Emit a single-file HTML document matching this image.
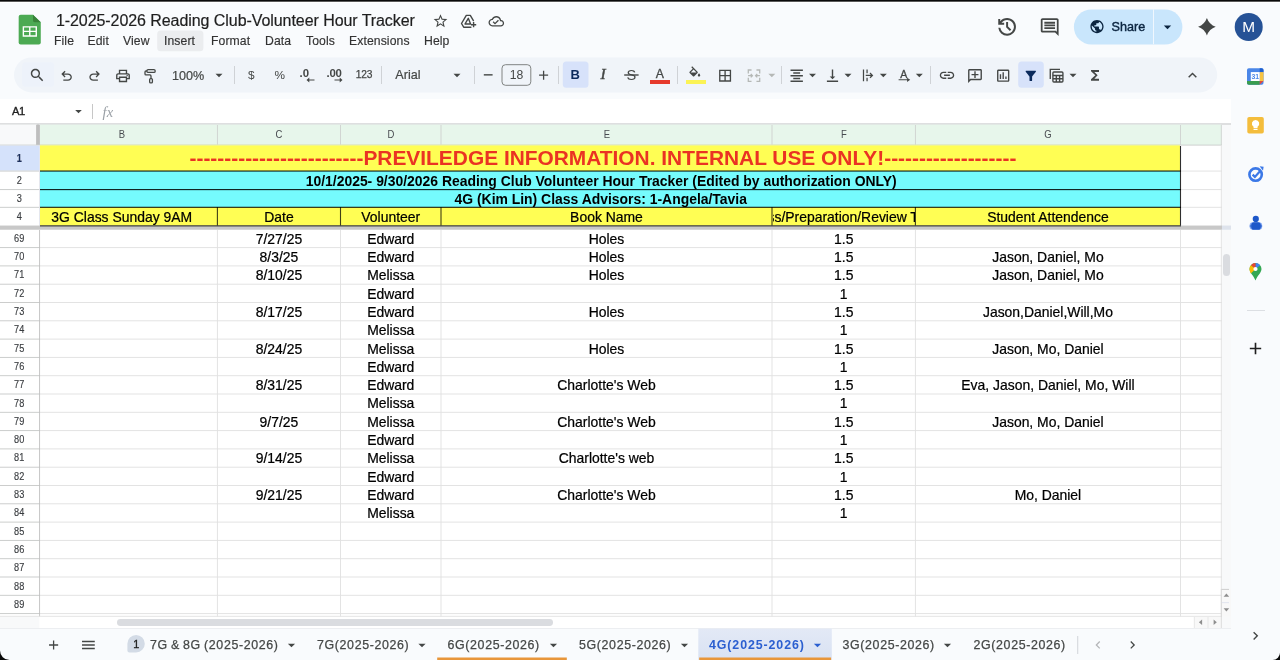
<!DOCTYPE html>
<html lang="en"><head><meta charset="utf-8">
<title>1-2025-2026 Reading Club-Volunteer Hour Tracker</title>
<style>
*{box-sizing:border-box;margin:0;padding:0}
html,body{width:1280px;height:660px;overflow:hidden;background:#f9fbfd}
body{position:relative;font-family:"Liberation Sans",sans-serif;color:#1f1f1f;-webkit-font-smoothing:antialiased}
#w{position:absolute;left:0;top:0;width:1280px;height:660px;overflow:hidden;will-change:transform}
.a{position:absolute}
.t{position:absolute;white-space:pre;line-height:1}
svg{position:absolute;overflow:visible}
.menu{position:absolute;top:33.8px;font-size:12.2px;color:#333;-webkit-text-stroke:.15px #333;white-space:pre;line-height:14px;letter-spacing:.1px}
.sep{position:absolute;top:66px;width:1px;height:18px;background:#cfd2d6}
.tb{position:absolute;font-size:12.2px;color:#444746;white-space:pre;line-height:14px}
.rh{position:absolute;left:.3px;width:38.4px;text-align:center;font-size:10.2px;color:#3a3d40;line-height:12px;transform:scaleX(.9);-webkit-text-stroke:.15px #3a3d40}
.ch{position:absolute;top:128.6px;text-align:center;font-size:10.1px;color:#484b50;line-height:12px;transform:scaleX(.94)}
.c{position:absolute;text-align:center;font-size:13.93px;color:#000;-webkit-text-stroke:.22px #000;white-space:pre;overflow:hidden;display:flex;justify-content:center}
.gl{position:absolute;background:#e1e1e1}
.tab{position:absolute;top:637.6px;font-size:12.4px;color:#444746;white-space:pre;line-height:14px;letter-spacing:.64px;-webkit-text-stroke:.25px #444746}
</style></head>
<body>
<div id="w">
<div class="a" style="left:0;top:0;width:1280px;height:1px;background:#0a0a0a"></div>
<div class="a" style="left:0;top:1px;width:1280px;height:1px;background:#5a5a5a"></div>
<div class="a" style="left:0;top:2px;width:1280px;height:1px;background:#ffffff"></div>
<svg style="left:18px;top:14px" width="25" height="33" viewBox="0 0 25 33"><g transform="translate(0.000 0.000) scale(1.0000 1.0000)">
<g transform="translate(0.67 0.67)">
<path d="M2 0H14.300L22.100 7.600V27.900a2 2 0 0 1-2 2H2a2 2 0 0 1-2-2V2a2 2 0 0 1 2-2z" fill="#4caa53"/>
<path d="M14.300 0L22.100 7.600H16.100a1.800 1.800 0 0 1-1.800-1.800z" fill="#388239"/>
<path d="M4 11.500H18.300v10.600H4zM5.400 12.900v3.100h5v-3.100zM11.800 12.900v3.100h5.100v-3.100zM5.400 17.400v3.300h5v-3.300zM11.800 17.400v3.300h5.100v-3.300z" fill="#fff" fill-rule="evenodd"/>
</g></g></svg>
<div class="t" style="left:55.9px;top:12px;font-size:16px;color:#1f1f1f;line-height:18px;letter-spacing:-.065px;-webkit-text-stroke:.2px #1f1f1f">1-2025-2026 Reading Club-Volunteer Hour Tracker</div>
<svg style="left:156px;top:29px" width="52" height="26" viewBox="0 0 52 26"><g transform="translate(0.000 0.000) scale(1.0000 1.0000)"><rect x="1.20" y="1.60" width="46.20" height="20.60" rx="3.5" fill="#ebedef" /></g></svg>
<div class="menu" style="left:54px">File</div>
<div class="menu" style="left:87.5px">Edit</div>
<div class="menu" style="left:123px">View</div>
<div class="menu" style="left:164px">Insert</div>
<div class="menu" style="left:211px">Format</div>
<div class="menu" style="left:265px">Data</div>
<div class="menu" style="left:306px">Tools</div>
<div class="menu" style="left:349px">Extensions</div>
<div class="menu" style="left:424px">Help</div>
<svg style="left:13px;top:56px" width="1209" height="40" viewBox="0 0 1209 40"><g transform="translate(0.000 0.000) scale(1.0000 1.0000)"><rect x="1.00" y="1.40" width="1203.20" height="35.00" rx="17.5" fill="#f0f4f9" /></g></svg>
<svg style="left:21px;top:61px" width="37" height="30" viewBox="0 0 37 30"><g transform="translate(0.000 0.000) scale(1.0000 1.0000)"><rect x="1.20" y="1.30" width="32.00" height="24.40" rx="3.5" fill="#edf2fa" /></g></svg>
<div class="a" style="left:0;top:99px;width:1231px;height:25px;background:#fff"></div>
<div class="t" style="left:12px;top:105px;font-size:11.2px;color:#1f1f1f;line-height:13px;letter-spacing:-.5px;-webkit-text-stroke:.35px #1f1f1f">A1</div>
<svg style="left:75px;top:109px" width="8" height="6" viewBox="0 0 8 6"><g transform="translate(0.200 0.900) scale(0.6600 0.6800)"><path d="M0 0h10L5 5z" fill="#444746"/></g></svg>
<div class="a" style="left:92px;top:104px;width:1px;height:15px;background:#c7c7c7"></div>
<div class="t" style="left:102.5px;top:103.5px;font-size:14.5px;font-family:'Liberation Serif',serif;font-style:italic;color:#9aa0a6;line-height:16px;letter-spacing:.2px">fx</div>
<div class="a" style="left:0.00px;top:124.00px;width:1231.00px;height:504.00px;background:#fff;"></div>
<div class="a" style="left:0px;top:123px;width:1231px;height:1px;background:rgba(200,202,204,0.600)"></div><div class="a" style="left:0px;top:124px;width:1231px;height:1px;background:rgba(200,202,204,0.600)"></div>
<div class="a" style="left:40px;top:125px;width:1181px;height:20px;background:rgba(231,246,235,1.000)"></div><div class="a" style="left:40px;top:124px;width:1181px;height:1px;background:rgba(231,246,235,0.400)"></div><div class="a" style="left:1221px;top:125px;width:1px;height:20px;background:rgba(231,246,235,0.500)"></div>
<div class="a" style="left:0px;top:125px;width:36px;height:20px;background:rgba(248,249,250,1.000)"></div><div class="a" style="left:0px;top:124px;width:36px;height:1px;background:rgba(248,249,250,0.400)"></div>
<div class="a" style="left:37px;top:125px;width:2px;height:20px;background:rgba(190,190,190,1.000)"></div><div class="a" style="left:37px;top:124px;width:2px;height:1px;background:rgba(190,190,190,0.400)"></div><div class="a" style="left:36px;top:125px;width:1px;height:20px;background:rgba(190,190,190,0.900)"></div><div class="a" style="left:39px;top:125px;width:1px;height:20px;background:rgba(190,190,190,0.900)"></div>
<div class="a" style="left:1222.00px;top:125.00px;width:9.00px;height:503.00px;background:#f8f9fa;"></div>
<div class="a" style="left:216px;top:125px;width:1px;height:20px;background:rgba(206,209,207,0.050)"></div><div class="a" style="left:217px;top:125px;width:1px;height:20px;background:rgba(206,209,207,0.850)"></div>
<div class="a" style="left:340px;top:125px;width:1px;height:20px;background:rgba(206,209,207,0.900)"></div>
<div class="a" style="left:440px;top:125px;width:1px;height:20px;background:rgba(206,209,207,0.450)"></div><div class="a" style="left:441px;top:125px;width:1px;height:20px;background:rgba(206,209,207,0.450)"></div>
<div class="a" style="left:771px;top:125px;width:1px;height:20px;background:rgba(206,209,207,0.450)"></div><div class="a" style="left:772px;top:125px;width:1px;height:20px;background:rgba(206,209,207,0.450)"></div>
<div class="a" style="left:914px;top:125px;width:1px;height:20px;background:rgba(206,209,207,0.050)"></div><div class="a" style="left:915px;top:125px;width:1px;height:20px;background:rgba(206,209,207,0.850)"></div>
<div class="a" style="left:1180px;top:125px;width:1px;height:20px;background:rgba(206,209,207,0.900)"></div>
<div class="a" style="left:1220px;top:125px;width:1px;height:20px;background:rgba(206,209,207,0.150)"></div><div class="a" style="left:1221px;top:125px;width:1px;height:20px;background:rgba(206,209,207,0.750)"></div>
<div class="a" style="left:0px;top:144px;width:1222px;height:1px;background:rgba(206,209,207,0.400)"></div><div class="a" style="left:0px;top:145px;width:1222px;height:1px;background:rgba(206,209,207,0.600)"></div>
<div class="ch" style="left:101.75px;width:40px">B</div>
<div class="ch" style="left:258.95px;width:40px">C</div>
<div class="ch" style="left:370.75px;width:40px">D</div>
<div class="ch" style="left:586.50px;width:40px">E</div>
<div class="ch" style="left:823.70px;width:40px">F</div>
<div class="ch" style="left:1027.95px;width:40px">G</div>
<div class="a" style="left:0px;top:146px;width:39px;height:24px;background:rgba(213,226,251,1.000)"></div><div class="a" style="left:0px;top:145px;width:39px;height:1px;background:rgba(213,226,251,0.400)"></div><div class="a" style="left:0px;top:170px;width:39px;height:1px;background:rgba(213,226,251,0.600)"></div><div class="a" style="left:39px;top:146px;width:1px;height:24px;background:rgba(213,226,251,0.400)"></div>
<div class="a" style="left:216px;top:230px;width:1px;height:387px;background:rgba(224,224,224,0.050)"></div><div class="a" style="left:217px;top:230px;width:1px;height:387px;background:rgba(224,224,224,0.850)"></div>
<div class="a" style="left:340px;top:230px;width:1px;height:387px;background:rgba(224,224,224,0.900)"></div>
<div class="a" style="left:440px;top:230px;width:1px;height:387px;background:rgba(224,224,224,0.450)"></div><div class="a" style="left:441px;top:230px;width:1px;height:387px;background:rgba(224,224,224,0.450)"></div>
<div class="a" style="left:771px;top:230px;width:1px;height:387px;background:rgba(224,224,224,0.450)"></div><div class="a" style="left:772px;top:230px;width:1px;height:387px;background:rgba(224,224,224,0.450)"></div>
<div class="a" style="left:914px;top:230px;width:1px;height:387px;background:rgba(224,224,224,0.050)"></div><div class="a" style="left:915px;top:230px;width:1px;height:387px;background:rgba(224,224,224,0.850)"></div>
<div class="a" style="left:1180px;top:230px;width:1px;height:387px;background:rgba(224,224,224,0.900)"></div>
<div class="a" style="left:1220px;top:230px;width:1px;height:387px;background:rgba(224,224,224,0.150)"></div><div class="a" style="left:1221px;top:230px;width:1px;height:387px;background:rgba(224,224,224,0.750)"></div>
<div class="a" style="left:1180px;top:146px;width:1px;height:80px;background:rgba(224,224,224,0.900)"></div>
<div class="a" style="left:1220px;top:146px;width:1px;height:80px;background:rgba(224,224,224,0.150)"></div><div class="a" style="left:1221px;top:146px;width:1px;height:80px;background:rgba(224,224,224,0.750)"></div>
<div class="a" style="left:0px;top:247px;width:40px;height:1px;background:rgba(198,200,199,0.850)"></div><div class="a" style="left:0px;top:248px;width:40px;height:1px;background:rgba(198,200,199,0.050)"></div>
<div class="a" style="left:40px;top:247px;width:1182px;height:1px;background:rgba(224,224,224,0.850)"></div><div class="a" style="left:40px;top:248px;width:1182px;height:1px;background:rgba(224,224,224,0.050)"></div>
<div class="a" style="left:0px;top:265px;width:40px;height:1px;background:rgba(198,200,199,0.550)"></div><div class="a" style="left:0px;top:266px;width:40px;height:1px;background:rgba(198,200,199,0.350)"></div>
<div class="a" style="left:40px;top:265px;width:1182px;height:1px;background:rgba(224,224,224,0.550)"></div><div class="a" style="left:40px;top:266px;width:1182px;height:1px;background:rgba(224,224,224,0.350)"></div>
<div class="a" style="left:0px;top:283px;width:40px;height:1px;background:rgba(198,200,199,0.250)"></div><div class="a" style="left:0px;top:284px;width:40px;height:1px;background:rgba(198,200,199,0.650)"></div>
<div class="a" style="left:40px;top:283px;width:1182px;height:1px;background:rgba(224,224,224,0.250)"></div><div class="a" style="left:40px;top:284px;width:1182px;height:1px;background:rgba(224,224,224,0.650)"></div>
<div class="a" style="left:0px;top:302px;width:40px;height:1px;background:rgba(198,200,199,0.900)"></div>
<div class="a" style="left:40px;top:302px;width:1182px;height:1px;background:rgba(224,224,224,0.900)"></div>
<div class="a" style="left:0px;top:320px;width:40px;height:1px;background:rgba(198,200,199,0.650)"></div><div class="a" style="left:0px;top:321px;width:40px;height:1px;background:rgba(198,200,199,0.250)"></div>
<div class="a" style="left:40px;top:320px;width:1182px;height:1px;background:rgba(224,224,224,0.650)"></div><div class="a" style="left:40px;top:321px;width:1182px;height:1px;background:rgba(224,224,224,0.250)"></div>
<div class="a" style="left:0px;top:338px;width:40px;height:1px;background:rgba(198,200,199,0.350)"></div><div class="a" style="left:0px;top:339px;width:40px;height:1px;background:rgba(198,200,199,0.550)"></div>
<div class="a" style="left:40px;top:338px;width:1182px;height:1px;background:rgba(224,224,224,0.350)"></div><div class="a" style="left:40px;top:339px;width:1182px;height:1px;background:rgba(224,224,224,0.550)"></div>
<div class="a" style="left:0px;top:356px;width:40px;height:1px;background:rgba(198,200,199,0.050)"></div><div class="a" style="left:0px;top:357px;width:40px;height:1px;background:rgba(198,200,199,0.850)"></div>
<div class="a" style="left:40px;top:356px;width:1182px;height:1px;background:rgba(224,224,224,0.050)"></div><div class="a" style="left:40px;top:357px;width:1182px;height:1px;background:rgba(224,224,224,0.850)"></div>
<div class="a" style="left:0px;top:375px;width:40px;height:1px;background:rgba(198,200,199,0.750)"></div><div class="a" style="left:0px;top:376px;width:40px;height:1px;background:rgba(198,200,199,0.150)"></div>
<div class="a" style="left:40px;top:375px;width:1182px;height:1px;background:rgba(224,224,224,0.750)"></div><div class="a" style="left:40px;top:376px;width:1182px;height:1px;background:rgba(224,224,224,0.150)"></div>
<div class="a" style="left:0px;top:393px;width:40px;height:1px;background:rgba(198,200,199,0.450)"></div><div class="a" style="left:0px;top:394px;width:40px;height:1px;background:rgba(198,200,199,0.450)"></div>
<div class="a" style="left:40px;top:393px;width:1182px;height:1px;background:rgba(224,224,224,0.450)"></div><div class="a" style="left:40px;top:394px;width:1182px;height:1px;background:rgba(224,224,224,0.450)"></div>
<div class="a" style="left:0px;top:411px;width:40px;height:1px;background:rgba(198,200,199,0.150)"></div><div class="a" style="left:0px;top:412px;width:40px;height:1px;background:rgba(198,200,199,0.750)"></div>
<div class="a" style="left:40px;top:411px;width:1182px;height:1px;background:rgba(224,224,224,0.150)"></div><div class="a" style="left:40px;top:412px;width:1182px;height:1px;background:rgba(224,224,224,0.750)"></div>
<div class="a" style="left:0px;top:430px;width:40px;height:1px;background:rgba(198,200,199,0.850)"></div><div class="a" style="left:0px;top:431px;width:40px;height:1px;background:rgba(198,200,199,0.050)"></div>
<div class="a" style="left:40px;top:430px;width:1182px;height:1px;background:rgba(224,224,224,0.850)"></div><div class="a" style="left:40px;top:431px;width:1182px;height:1px;background:rgba(224,224,224,0.050)"></div>
<div class="a" style="left:0px;top:448px;width:40px;height:1px;background:rgba(198,200,199,0.550)"></div><div class="a" style="left:0px;top:449px;width:40px;height:1px;background:rgba(198,200,199,0.350)"></div>
<div class="a" style="left:40px;top:448px;width:1182px;height:1px;background:rgba(224,224,224,0.550)"></div><div class="a" style="left:40px;top:449px;width:1182px;height:1px;background:rgba(224,224,224,0.350)"></div>
<div class="a" style="left:0px;top:466px;width:40px;height:1px;background:rgba(198,200,199,0.250)"></div><div class="a" style="left:0px;top:467px;width:40px;height:1px;background:rgba(198,200,199,0.650)"></div>
<div class="a" style="left:40px;top:466px;width:1182px;height:1px;background:rgba(224,224,224,0.250)"></div><div class="a" style="left:40px;top:467px;width:1182px;height:1px;background:rgba(224,224,224,0.650)"></div>
<div class="a" style="left:0px;top:485px;width:40px;height:1px;background:rgba(198,200,199,0.900)"></div>
<div class="a" style="left:40px;top:485px;width:1182px;height:1px;background:rgba(224,224,224,0.900)"></div>
<div class="a" style="left:0px;top:503px;width:40px;height:1px;background:rgba(198,200,199,0.650)"></div><div class="a" style="left:0px;top:504px;width:40px;height:1px;background:rgba(198,200,199,0.250)"></div>
<div class="a" style="left:40px;top:503px;width:1182px;height:1px;background:rgba(224,224,224,0.650)"></div><div class="a" style="left:40px;top:504px;width:1182px;height:1px;background:rgba(224,224,224,0.250)"></div>
<div class="a" style="left:0px;top:521px;width:40px;height:1px;background:rgba(198,200,199,0.350)"></div><div class="a" style="left:0px;top:522px;width:40px;height:1px;background:rgba(198,200,199,0.550)"></div>
<div class="a" style="left:40px;top:521px;width:1182px;height:1px;background:rgba(224,224,224,0.350)"></div><div class="a" style="left:40px;top:522px;width:1182px;height:1px;background:rgba(224,224,224,0.550)"></div>
<div class="a" style="left:0px;top:539px;width:40px;height:1px;background:rgba(198,200,199,0.050)"></div><div class="a" style="left:0px;top:540px;width:40px;height:1px;background:rgba(198,200,199,0.850)"></div>
<div class="a" style="left:40px;top:539px;width:1182px;height:1px;background:rgba(224,224,224,0.050)"></div><div class="a" style="left:40px;top:540px;width:1182px;height:1px;background:rgba(224,224,224,0.850)"></div>
<div class="a" style="left:0px;top:558px;width:40px;height:1px;background:rgba(198,200,199,0.750)"></div><div class="a" style="left:0px;top:559px;width:40px;height:1px;background:rgba(198,200,199,0.150)"></div>
<div class="a" style="left:40px;top:558px;width:1182px;height:1px;background:rgba(224,224,224,0.750)"></div><div class="a" style="left:40px;top:559px;width:1182px;height:1px;background:rgba(224,224,224,0.150)"></div>
<div class="a" style="left:0px;top:576px;width:40px;height:1px;background:rgba(198,200,199,0.450)"></div><div class="a" style="left:0px;top:577px;width:40px;height:1px;background:rgba(198,200,199,0.450)"></div>
<div class="a" style="left:40px;top:576px;width:1182px;height:1px;background:rgba(224,224,224,0.450)"></div><div class="a" style="left:40px;top:577px;width:1182px;height:1px;background:rgba(224,224,224,0.450)"></div>
<div class="a" style="left:0px;top:594px;width:40px;height:1px;background:rgba(198,200,199,0.150)"></div><div class="a" style="left:0px;top:595px;width:40px;height:1px;background:rgba(198,200,199,0.750)"></div>
<div class="a" style="left:40px;top:594px;width:1182px;height:1px;background:rgba(224,224,224,0.150)"></div><div class="a" style="left:40px;top:595px;width:1182px;height:1px;background:rgba(224,224,224,0.750)"></div>
<div class="a" style="left:0px;top:613px;width:40px;height:1px;background:rgba(198,200,199,0.850)"></div><div class="a" style="left:0px;top:614px;width:40px;height:1px;background:rgba(198,200,199,0.050)"></div>
<div class="a" style="left:40px;top:613px;width:1182px;height:1px;background:rgba(224,224,224,0.850)"></div><div class="a" style="left:40px;top:614px;width:1182px;height:1px;background:rgba(224,224,224,0.050)"></div>
<div class="a" style="left:0px;top:170px;width:40px;height:1px;background:rgba(198,200,199,0.400)"></div><div class="a" style="left:0px;top:171px;width:40px;height:1px;background:rgba(198,200,199,0.500)"></div>
<div class="a" style="left:1181px;top:170px;width:41px;height:1px;background:rgba(224,224,224,0.400)"></div><div class="a" style="left:1181px;top:171px;width:41px;height:1px;background:rgba(224,224,224,0.500)"></div>
<div class="a" style="left:0px;top:189px;width:40px;height:1px;background:rgba(198,200,199,0.850)"></div><div class="a" style="left:0px;top:190px;width:40px;height:1px;background:rgba(198,200,199,0.050)"></div>
<div class="a" style="left:1181px;top:189px;width:41px;height:1px;background:rgba(224,224,224,0.850)"></div><div class="a" style="left:1181px;top:190px;width:41px;height:1px;background:rgba(224,224,224,0.050)"></div>
<div class="a" style="left:0px;top:206px;width:40px;height:1px;background:rgba(198,200,199,0.150)"></div><div class="a" style="left:0px;top:207px;width:40px;height:1px;background:rgba(198,200,199,0.750)"></div>
<div class="a" style="left:1181px;top:206px;width:41px;height:1px;background:rgba(224,224,224,0.150)"></div><div class="a" style="left:1181px;top:207px;width:41px;height:1px;background:rgba(224,224,224,0.750)"></div>
<div class="a" style="left:39px;top:146px;width:1px;height:80px;background:rgba(225,227,235,0.850)"></div><div class="a" style="left:40px;top:146px;width:1px;height:80px;background:rgba(225,227,235,0.050)"></div>
<div class="a" style="left:39px;top:230px;width:1px;height:398px;background:rgba(192,192,192,0.850)"></div><div class="a" style="left:40px;top:230px;width:1px;height:398px;background:rgba(192,192,192,0.050)"></div>
<div class="a" style="left:40.00px;top:145.00px;width:1140.00px;height:26.00px;background:#fffe54;"></div>
<div class="a" style="left:40px;top:144px;width:1140px;height:1px;background:rgba(232,240,170,0.400)"></div><div class="a" style="left:40px;top:145px;width:1140px;height:1px;background:rgba(232,240,170,0.600)"></div>
<div class="a" style="left:40.00px;top:171.00px;width:1140.00px;height:36.00px;background:#75fbfd;"></div>
<div class="a" style="left:40.00px;top:207.00px;width:1140.00px;height:19.00px;background:#fffe54;"></div>
<div class="a" style="left:40px;top:170px;width:1141px;height:1px;background:rgba(0,0,0,0.450)"></div><div class="a" style="left:40px;top:171px;width:1141px;height:1px;background:rgba(0,0,0,0.540)"></div>
<div class="a" style="left:40px;top:189px;width:1141px;height:1px;background:rgba(0,0,0,0.855)"></div><div class="a" style="left:40px;top:190px;width:1141px;height:1px;background:rgba(0,0,0,0.135)"></div>
<div class="a" style="left:40px;top:206px;width:1141px;height:1px;background:rgba(0,0,0,0.225)"></div><div class="a" style="left:40px;top:207px;width:1141px;height:1px;background:rgba(0,0,0,0.765)"></div>
<div class="a" style="left:40px;top:225px;width:1141px;height:1px;background:rgba(0,0,0,0.495)"></div><div class="a" style="left:40px;top:226px;width:1141px;height:1px;background:rgba(0,0,0,0.495)"></div>
<div class="a" style="left:1179px;top:146px;width:1px;height:80px;background:rgba(0,0,0,0.040)"></div><div class="a" style="left:1180px;top:146px;width:1px;height:80px;background:rgba(0,0,0,0.800)"></div><div class="a" style="left:1181px;top:146px;width:1px;height:80px;background:rgba(0,0,0,0.040)"></div>
<div class="a" style="left:216px;top:207px;width:1px;height:19px;background:rgba(0,0,0,0.113)"></div><div class="a" style="left:217px;top:207px;width:1px;height:19px;background:rgba(0,0,0,0.713)"></div>
<div class="a" style="left:339px;top:207px;width:1px;height:19px;background:rgba(0,0,0,0.038)"></div><div class="a" style="left:340px;top:207px;width:1px;height:19px;background:rgba(0,0,0,0.750)"></div><div class="a" style="left:341px;top:207px;width:1px;height:19px;background:rgba(0,0,0,0.038)"></div>
<div class="a" style="left:440px;top:207px;width:1px;height:19px;background:rgba(0,0,0,0.413)"></div><div class="a" style="left:441px;top:207px;width:1px;height:19px;background:rgba(0,0,0,0.413)"></div>
<div class="a" style="left:771px;top:207px;width:1px;height:19px;background:rgba(0,0,0,0.412)"></div><div class="a" style="left:772px;top:207px;width:1px;height:19px;background:rgba(0,0,0,0.412)"></div>
<div class="a" style="left:914px;top:207px;width:1px;height:19px;background:rgba(0,0,0,0.112)"></div><div class="a" style="left:915px;top:207px;width:1px;height:19px;background:rgba(0,0,0,0.712)"></div>
<div class="a" style="left:0px;top:226px;width:1222px;height:3px;background:rgba(200,200,200,1.000)"></div><div class="a" style="left:0px;top:225px;width:1222px;height:1px;background:rgba(200,200,200,0.450)"></div><div class="a" style="left:0px;top:229px;width:1222px;height:1px;background:rgba(200,200,200,0.750)"></div>
<div class="a" style="left:40px;top:225px;width:1141px;height:1px;background:rgba(0,0,0,0.330)"></div><div class="a" style="left:40px;top:226px;width:1141px;height:1px;background:rgba(0,0,0,0.330)"></div>
<div class="a" style="left:1222px;top:226px;width:9px;height:3px;background:rgba(222,227,236,1.000)"></div><div class="a" style="left:1222px;top:225px;width:9px;height:1px;background:rgba(222,227,236,0.450)"></div><div class="a" style="left:1222px;top:229px;width:9px;height:1px;background:rgba(222,227,236,0.750)"></div>
<div class="rh" style="top:152.70px;font-weight:bold;color:#1b2f5e;">1</div>
<div class="rh" style="top:174.50px;">2</div>
<div class="rh" style="top:192.80px;">3</div>
<div class="rh" style="top:211.10px;">4</div>
<div class="t" style="left:189.5px;top:146.5px;font-size:20.9px;font-weight:bold;color:#ea3323;line-height:21px">-------------------------PREVILEDGE INFORMATION. INTERNAL USE ONLY!-------------------</div>
<div class="t" style="left:305.7px;top:173.5px;font-size:13.93px;font-weight:bold;color:#000;line-height:14px">10/1/2025- 9/30/2026 Reading Club Volunteer Hour Tracker (Edited by authorization ONLY)</div>
<div class="t" style="left:454.5px;top:191.8px;font-size:13.93px;font-weight:bold;color:#000;line-height:14px">4G (Kim Lin) Class Advisors: 1-Angela/Tavia</div>
<div class="c" style="left:26.70px;width:190.10px;top:208px;height:18px;line-height:18.6px"><span style="">3G Class Sunday 9AM</span></div>
<div class="c" style="left:218.00px;width:121.90px;top:208px;height:18px;line-height:18.6px"><span style="">Date</span></div>
<div class="c" style="left:341.10px;width:99.30px;top:208px;height:18px;line-height:18.6px"><span style="">Volunteer</span></div>
<div class="c" style="left:441.60px;width:329.80px;top:208px;height:18px;line-height:18.6px"><span style="">Book Name</span></div>
<div class="c" style="left:772.60px;width:142.20px;top:208px;height:18px;line-height:18.6px"><span style="">Class/Preparation/Review Time</span></div>
<div class="c" style="left:916.00px;width:263.90px;top:208px;height:18px;line-height:18.6px"><span style="">Student Attendence</span></div>
<div class="rh" style="top:232.85px;">69</div>
<div class="c" style="left:217.40px;width:123.10px;top:231px;height:16px;line-height:16px"><span>7/27/25</span></div>
<div class="c" style="left:340.50px;width:100.50px;top:231px;height:16px;line-height:16px"><span>Edward</span></div>
<div class="c" style="left:441.00px;width:331.00px;top:231px;height:16px;line-height:16px"><span>Holes</span></div>
<div class="c" style="left:772.00px;width:143.40px;top:231px;height:16px;line-height:16px"><span>1.5</span></div>
<div class="rh" style="top:251.15px;">70</div>
<div class="c" style="left:217.40px;width:123.10px;top:249px;height:16px;line-height:16px"><span>8/3/25</span></div>
<div class="c" style="left:340.50px;width:100.50px;top:249px;height:16px;line-height:16px"><span>Edward</span></div>
<div class="c" style="left:441.00px;width:331.00px;top:249px;height:16px;line-height:16px"><span>Holes</span></div>
<div class="c" style="left:772.00px;width:143.40px;top:249px;height:16px;line-height:16px"><span>1.5</span></div>
<div class="c" style="left:915.40px;width:265.10px;top:249px;height:16px;line-height:16px"><span>Jason, Daniel, Mo</span></div>
<div class="rh" style="top:269.45px;">71</div>
<div class="c" style="left:217.40px;width:123.10px;top:267px;height:16px;line-height:16px"><span>8/10/25</span></div>
<div class="c" style="left:340.50px;width:100.50px;top:267px;height:16px;line-height:16px"><span>Melissa</span></div>
<div class="c" style="left:441.00px;width:331.00px;top:267px;height:16px;line-height:16px"><span>Holes</span></div>
<div class="c" style="left:772.00px;width:143.40px;top:267px;height:16px;line-height:16px"><span>1.5</span></div>
<div class="c" style="left:915.40px;width:265.10px;top:267px;height:16px;line-height:16px"><span>Jason, Daniel, Mo</span></div>
<div class="rh" style="top:287.75px;">72</div>
<div class="c" style="left:340.50px;width:100.50px;top:286px;height:16px;line-height:16px"><span>Edward</span></div>
<div class="c" style="left:772.00px;width:143.40px;top:286px;height:16px;line-height:16px"><span>1</span></div>
<div class="rh" style="top:306.05px;">73</div>
<div class="c" style="left:217.40px;width:123.10px;top:304px;height:16px;line-height:16px"><span>8/17/25</span></div>
<div class="c" style="left:340.50px;width:100.50px;top:304px;height:16px;line-height:16px"><span>Edward</span></div>
<div class="c" style="left:441.00px;width:331.00px;top:304px;height:16px;line-height:16px"><span>Holes</span></div>
<div class="c" style="left:772.00px;width:143.40px;top:304px;height:16px;line-height:16px"><span>1.5</span></div>
<div class="c" style="left:915.40px;width:265.10px;top:304px;height:16px;line-height:16px"><span>Jason,Daniel,Will,Mo</span></div>
<div class="rh" style="top:324.35px;">74</div>
<div class="c" style="left:340.50px;width:100.50px;top:322px;height:16px;line-height:16px"><span>Melissa</span></div>
<div class="c" style="left:772.00px;width:143.40px;top:322px;height:16px;line-height:16px"><span>1</span></div>
<div class="rh" style="top:342.65px;">75</div>
<div class="c" style="left:217.40px;width:123.10px;top:341px;height:16px;line-height:16px"><span>8/24/25</span></div>
<div class="c" style="left:340.50px;width:100.50px;top:341px;height:16px;line-height:16px"><span>Melissa</span></div>
<div class="c" style="left:441.00px;width:331.00px;top:341px;height:16px;line-height:16px"><span>Holes</span></div>
<div class="c" style="left:772.00px;width:143.40px;top:341px;height:16px;line-height:16px"><span>1.5</span></div>
<div class="c" style="left:915.40px;width:265.10px;top:341px;height:16px;line-height:16px"><span>Jason, Mo, Daniel</span></div>
<div class="rh" style="top:360.95px;">76</div>
<div class="c" style="left:340.50px;width:100.50px;top:359px;height:16px;line-height:16px"><span>Edward</span></div>
<div class="c" style="left:772.00px;width:143.40px;top:359px;height:16px;line-height:16px"><span>1</span></div>
<div class="rh" style="top:379.25px;">77</div>
<div class="c" style="left:217.40px;width:123.10px;top:377px;height:16px;line-height:16px"><span>8/31/25</span></div>
<div class="c" style="left:340.50px;width:100.50px;top:377px;height:16px;line-height:16px"><span>Edward</span></div>
<div class="c" style="left:441.00px;width:331.00px;top:377px;height:16px;line-height:16px"><span>Charlotte's Web</span></div>
<div class="c" style="left:772.00px;width:143.40px;top:377px;height:16px;line-height:16px"><span>1.5</span></div>
<div class="c" style="left:915.40px;width:265.10px;top:377px;height:16px;line-height:16px"><span>Eva, Jason, Daniel, Mo, Will</span></div>
<div class="rh" style="top:397.55px;">78</div>
<div class="c" style="left:340.50px;width:100.50px;top:395px;height:16px;line-height:16px"><span>Melissa</span></div>
<div class="c" style="left:772.00px;width:143.40px;top:395px;height:16px;line-height:16px"><span>1</span></div>
<div class="rh" style="top:415.85px;">79</div>
<div class="c" style="left:217.40px;width:123.10px;top:414px;height:16px;line-height:16px"><span>9/7/25</span></div>
<div class="c" style="left:340.50px;width:100.50px;top:414px;height:16px;line-height:16px"><span>Melissa</span></div>
<div class="c" style="left:441.00px;width:331.00px;top:414px;height:16px;line-height:16px"><span>Charlotte's Web</span></div>
<div class="c" style="left:772.00px;width:143.40px;top:414px;height:16px;line-height:16px"><span>1.5</span></div>
<div class="c" style="left:915.40px;width:265.10px;top:414px;height:16px;line-height:16px"><span>Jason, Mo, Daniel</span></div>
<div class="rh" style="top:434.15px;">80</div>
<div class="c" style="left:340.50px;width:100.50px;top:432px;height:16px;line-height:16px"><span>Edward</span></div>
<div class="c" style="left:772.00px;width:143.40px;top:432px;height:16px;line-height:16px"><span>1</span></div>
<div class="rh" style="top:452.45px;">81</div>
<div class="c" style="left:217.40px;width:123.10px;top:450px;height:16px;line-height:16px"><span>9/14/25</span></div>
<div class="c" style="left:340.50px;width:100.50px;top:450px;height:16px;line-height:16px"><span>Melissa</span></div>
<div class="c" style="left:441.00px;width:331.00px;top:450px;height:16px;line-height:16px"><span>Charlotte's web</span></div>
<div class="c" style="left:772.00px;width:143.40px;top:450px;height:16px;line-height:16px"><span>1.5</span></div>
<div class="rh" style="top:470.75px;">82</div>
<div class="c" style="left:340.50px;width:100.50px;top:469px;height:16px;line-height:16px"><span>Edward</span></div>
<div class="c" style="left:772.00px;width:143.40px;top:469px;height:16px;line-height:16px"><span>1</span></div>
<div class="rh" style="top:489.05px;">83</div>
<div class="c" style="left:217.40px;width:123.10px;top:487px;height:16px;line-height:16px"><span>9/21/25</span></div>
<div class="c" style="left:340.50px;width:100.50px;top:487px;height:16px;line-height:16px"><span>Edward</span></div>
<div class="c" style="left:441.00px;width:331.00px;top:487px;height:16px;line-height:16px"><span>Charlotte's Web</span></div>
<div class="c" style="left:772.00px;width:143.40px;top:487px;height:16px;line-height:16px"><span>1.5</span></div>
<div class="c" style="left:915.40px;width:265.10px;top:487px;height:16px;line-height:16px"><span>Mo, Daniel</span></div>
<div class="rh" style="top:507.35px;">84</div>
<div class="c" style="left:340.50px;width:100.50px;top:505px;height:16px;line-height:16px"><span>Melissa</span></div>
<div class="c" style="left:772.00px;width:143.40px;top:505px;height:16px;line-height:16px"><span>1</span></div>
<div class="rh" style="top:525.65px;">85</div>
<div class="rh" style="top:543.95px;">86</div>
<div class="rh" style="top:562.25px;">87</div>
<div class="rh" style="top:580.55px;">88</div>
<div class="rh" style="top:598.85px;">89</div>
<div class="a" style="left:0px;top:617px;width:1222px;height:11px;background:rgba(255,255,255,1.000)"></div><div class="a" style="left:0px;top:616px;width:1222px;height:1px;background:rgba(255,255,255,0.200)"></div><div class="a" style="left:0px;top:628px;width:1222px;height:1px;background:rgba(255,255,255,0.200)"></div>
<div class="a" style="left:0px;top:617px;width:39px;height:11px;background:rgba(248,249,250,1.000)"></div><div class="a" style="left:0px;top:616px;width:39px;height:1px;background:rgba(248,249,250,0.200)"></div><div class="a" style="left:0px;top:628px;width:39px;height:1px;background:rgba(248,249,250,0.200)"></div><div class="a" style="left:39px;top:617px;width:1px;height:11px;background:rgba(248,249,250,0.300)"></div>
<div class="a" style="left:0px;top:615px;width:1222px;height:1px;background:rgba(228,228,228,0.200)"></div><div class="a" style="left:0px;top:616px;width:1222px;height:1px;background:rgba(228,228,228,0.800)"></div>
<div class="a" style="left:117.00px;top:618.80px;width:436.00px;height:6.80px;background:#dadce0;border-radius:3.4px"></div>
<div class="a" style="left:1222.80px;top:253.50px;width:7.20px;height:22.40px;background:#dadce0;border-radius:3.6px"></div>
<div class="a" style="left:1222px;top:590px;width:9px;height:26px;background:rgba(248,248,248,1.000)"></div><div class="a" style="left:1222px;top:589px;width:9px;height:1px;background:rgba(248,248,248,0.500)"></div><div class="a" style="left:1222px;top:616px;width:9px;height:1px;background:rgba(248,248,248,0.300)"></div><div class="a" style="left:1221px;top:590px;width:1px;height:26px;background:rgba(248,248,248,0.200)"></div>
<div class="a" style="left:1221px;top:588px;width:8px;height:1px;background:rgba(205,205,205,0.100)"></div><div class="a" style="left:1221px;top:589px;width:8px;height:1px;background:rgba(205,205,205,0.900)"></div>
<div class="a" style="left:1221px;top:602px;width:8px;height:1px;background:rgba(225,228,238,0.900)"></div><div class="a" style="left:1221px;top:603px;width:8px;height:1px;background:rgba(225,228,238,0.100)"></div>
<div class="a" style="left:1195px;top:617px;width:26px;height:11px;background:rgba(248,248,248,1.000)"></div><div class="a" style="left:1195px;top:628px;width:26px;height:1px;background:rgba(248,248,248,0.200)"></div><div class="a" style="left:1194px;top:617px;width:1px;height:11px;background:rgba(248,248,248,0.600)"></div>
<div class="a" style="left:1193px;top:617px;width:1px;height:11px;background:rgba(228,228,228,0.150)"></div><div class="a" style="left:1194px;top:617px;width:1px;height:11px;background:rgba(228,228,228,0.750)"></div>
<div class="a" style="left:1207px;top:617px;width:1px;height:11px;background:rgba(228,228,228,0.450)"></div><div class="a" style="left:1208px;top:617px;width:1px;height:11px;background:rgba(228,228,228,0.450)"></div>
<div class="a" style="left:1220px;top:589px;width:1px;height:39px;background:rgba(215,215,215,0.150)"></div><div class="a" style="left:1221px;top:589px;width:1px;height:39px;background:rgba(215,215,215,0.750)"></div>
<svg style="left:1223px;top:593px" width="8" height="5" viewBox="0 0 8 5"><g transform="translate(0.600 0.600) scale(0.5600 0.6400)"><path d="M0 5h10L5 0z" fill="#8e8e8e"/></g></svg>
<svg style="left:1223px;top:608px" width="8" height="5" viewBox="0 0 8 5"><g transform="translate(0.600 0.200) scale(0.5600 0.6400)"><path d="M0 0h10L5 5z" fill="#8e8e8e"/></g></svg>
<svg style="left:1198px;top:619px" width="6" height="8" viewBox="0 0 6 8"><g transform="translate(0.900 0.600) scale(0.6400 0.5400)"><path d="M5 0v10L0 5z" fill="#8e8e8e"/></g></svg>
<svg style="left:1213px;top:619px" width="5" height="8" viewBox="0 0 5 8"><g transform="translate(0.600 0.600) scale(0.6400 0.5400)"><path d="M0 0v10L5 5z" fill="#8e8e8e"/></g></svg>
<svg style="left:1247px;top:68px" width="18" height="18" viewBox="0 0 18 18"><g transform="translate(0.000 0.300) scale(1.0000 1.0000)">
<rect x="0" y="0" width="16.5" height="16.5" rx="1.800" fill="#4a86e8"/>
<path d="M12.700 0h2a1.800 1.800 0 0 1 1.800 1.800v2h-3.800z" fill="#1e5fcf"/>
<rect x="12.700" y="3.800" width="3.800" height="8.900" fill="#f7c342"/>
<path d="M0 12.700h12.700v3.800H1.800A1.800 1.800 0 0 1 0 14.700z" fill="#3a9d4f"/>
<path d="M12.700 12.700h3.800l-3.800 3.800z" fill="#e04a3f"/>
<rect x="3.800" y="3.800" width="8.900" height="8.900" fill="#fff"/>
<text x="8.250" y="11" font-family="Liberation Sans, sans-serif" font-size="6.800" font-weight="bold" fill="#4a86e8" text-anchor="middle">31</text></g></svg>
<svg style="left:1247px;top:117px" width="18" height="18" viewBox="0 0 18 18"><g transform="translate(0.300 0.000) scale(1.0000 1.0000)">
<rect width="16.500" height="16.500" rx="1.800" fill="#f4bd3c"/>
<path d="M8.250 2.900a3.700 3.700 0 0 0-2 6.800V10.900h4V9.700A3.700 3.700 0 0 0 8.250 2.900zM6.250 11.700h4v1.300h-4z" fill="#fff"/></g></svg>
<svg style="left:1247px;top:165px" width="19" height="19" viewBox="0 0 19 19" fill="none"><g transform="translate(0.000 0.000) scale(1.0000 1.0000)">
<circle cx="8.600" cy="9.600" r="6.200" stroke="#3b78e7" stroke-width="2.600"/>
<path d="M5.600 9.600l2.300 2.300 5.300-5.900" stroke="#3b78e7" stroke-width="2.200"/>
<path d="M12.600 1.200l4 .6-.6 4z" fill="#3b78e7"/></g></svg>
<svg style="left:1249px;top:215px" width="15" height="17" viewBox="0 0 15 17"><g transform="translate(0.000 0.000) scale(1.0000 1.0000)">
<rect x="0.6" y="7.300" width="12.600" height="7.500" rx="3.200" fill="#8fb0f5"/>
<rect x="2.300" y="7.300" width="9.400" height="7.500" rx="2.600" fill="#1d57c9"/>
<rect x="0.6" y="9.600" width="12.600" height="3" rx="1.500" fill="#1d57c9" opacity=".55"/>
<circle cx="6.800" cy="3.900" r="3.100" fill="#1d57c9"/></g></svg>
<svg style="left:1249px;top:263px" width="14" height="19" viewBox="0 0 14 19"><g transform="translate(0.500 0.000) scale(1.0000 1.0000)">
<path d="M6 0a6 6 0 0 1 6 6c0 3.600-4 6.500-6 11.500C4 12.500 0 9.600 0 6a6 6 0 0 1 6-6z" fill="#34a853"/>
<path d="M6 0a6 6 0 0 1 4.600 2.150L6 6z" fill="#4285f4"/>
<path d="M1.400 2.150A6 6 0 0 1 6 0v6z" fill="#ea4335"/>
<path d="M0 6a6 6 0 0 1 1.400-3.850L6 6 1.300 10.400C.5 9 0 7.600 0 6z" fill="#fbbc04"/>
<circle cx="6" cy="6" r="2.100" fill="#fff"/></g></svg>
<div class="a" style="left:1247.00px;top:310.30px;width:17.60px;height:1.00px;background:#dcdfe3;"></div>
<svg style="left:1245px;top:338px" width="22" height="22" viewBox="0 0 22 22"><g transform="translate(0.750 0.750) scale(0.8125 0.8125)"><path d="M19 13h-6v6h-2v-6H5v-2h6V5h2v6h6v2z" fill="#1f1f1f" /></g></svg>
<svg style="left:1247px;top:627px" width="18" height="19" viewBox="0 0 18 19"><g transform="translate(0.200 0.500) scale(0.6917 0.6917)"><path d="M10 6L8.590 7.410 13.170 12l-4.580 4.590L10 18l6-6z" fill="#444746" /></g></svg>
<div class="a" style="left:0.00px;top:628.00px;width:1231.00px;height:32.00px;background:#f9fbfd;"></div>
<div class="a" style="left:0.00px;top:628.00px;width:1231.00px;height:1.00px;background:#eceef1;"></div>
<svg style="left:45px;top:637px" width="18" height="17" viewBox="0 0 18 17"><g transform="translate(0.800 0.200) scale(0.6500 0.6500)"><path d="M19 13h-6v6h-2v-6H5v-2h6V5h2v6h6v2z" fill="#444746" /></g></svg>
<svg style="left:79px;top:636px" width="19" height="19" viewBox="0 0 19 19"><g transform="translate(0.900 0.500) scale(0.7083 0.7083)"><path d="M3 18h18v-2H3v2zm0-5h18v-2H3v2zm0-7v2h18V6H3z" fill="#444746" /></g></svg>
<svg style="left:698px;top:628px" width="136" height="33" viewBox="0 0 136 33"><g transform="translate(0.000 0.000) scale(1.0000 1.0000)"><defs><linearGradient id="tg" x1="0" y1="0" x2="0" y2="1"><stop offset="0" stop-color="#e3e9f6"/><stop offset="1" stop-color="#d9e2f3"/></linearGradient></defs><rect x=".3" y=".6" width="133.500" height="31.400" fill="url(#tg)"/></g></svg>
<svg style="left:436px;top:656px" width="135" height="8" viewBox="0 0 135 8"><g transform="translate(0.000 0.000) scale(1.0000 1.0000)"><rect x="1.20" y="1.50" width="129.60" height="2.50" rx="0" fill="#e8963a" /></g></svg>
<svg style="left:698px;top:656px" width="137" height="8" viewBox="0 0 137 8"><g transform="translate(0.000 0.000) scale(1.0000 1.0000)"><rect x="1.20" y="1.50" width="131.90" height="2.50" rx="0" fill="#e8963a" /></g></svg>
<svg style="left:127px;top:634px" width="20" height="20" viewBox="0 0 20 20"><g transform="translate(0.000 0.000) scale(1.0000 1.0000)"><path d="M9.100 1a8.700 8.700 0 0 1 0 17.400H2.400a2 2 0 0 1-2-2V9.700A8.700 8.700 0 0 1 9.100 1z" fill="#d3dbe6"/></g></svg>
<div class="t" style="left:127.6px;width:17.5px;text-align:center;top:639px;font-size:10.8px;color:#1f1f1f;-webkit-text-stroke:.35px #1f1f1f;line-height:11px">1</div>
<div class="tab" style="left:150px;word-spacing:-.9px;">7G &amp; 8G (2025-2026)</div>
<svg style="left:287px;top:643px" width="10" height="6" viewBox="0 0 10 6"><g transform="translate(0.900 0.700) scale(0.7200 0.7200)"><path d="M0 0h10L5 5z" fill="#444746"/></g></svg>
<div class="tab" style="left:317px;">7G(2025-2026)</div>
<svg style="left:418px;top:643px" width="9" height="6" viewBox="0 0 9 6"><g transform="translate(0.400 0.700) scale(0.7200 0.7200)"><path d="M0 0h10L5 5z" fill="#444746"/></g></svg>
<div class="tab" style="left:447.5px;">6G(2025-2026)</div>
<svg style="left:549px;top:643px" width="10" height="6" viewBox="0 0 10 6"><g transform="translate(0.900 0.700) scale(0.7200 0.7200)"><path d="M0 0h10L5 5z" fill="#444746"/></g></svg>
<div class="tab" style="left:579px;">5G(2025-2026)</div>
<svg style="left:680px;top:643px" width="10" height="6" viewBox="0 0 10 6"><g transform="translate(0.900 0.700) scale(0.7200 0.7200)"><path d="M0 0h10L5 5z" fill="#444746"/></g></svg>
<div class="tab" style="left:709px;color:#2b5fd0;font-weight:bold;-webkit-text-stroke:0;letter-spacing:.9px;">4G(2025-2026)</div>
<svg style="left:813px;top:643px" width="10" height="6" viewBox="0 0 10 6"><g transform="translate(0.900 0.700) scale(0.7200 0.7200)"><path d="M0 0h10L5 5z" fill="#2b5fd0"/></g></svg>
<div class="tab" style="left:842.5px;">3G(2025-2026)</div>
<svg style="left:943px;top:643px" width="10" height="6" viewBox="0 0 10 6"><g transform="translate(0.900 0.700) scale(0.7200 0.7200)"><path d="M0 0h10L5 5z" fill="#444746"/></g></svg>
<div class="tab" style="left:973.5px;">2G(2025-2026)</div>
<svg style="left:1076px;top:635px" width="6" height="23" viewBox="0 0 6 23"><g transform="translate(0.000 0.000) scale(1.0000 1.0000)"><rect x="1.30" y="1.00" width="0.90" height="18.00" rx="0" fill="#cdd0d4" /></g></svg>
<svg style="left:1090px;top:637px" width="17" height="17" viewBox="0 0 17 17"><g transform="translate(0.250 0.250) scale(0.6458 0.6458)"><path d="M15.410 7.410L14 6l-6 6 6 6 1.410-1.410L10.830 12z" fill="#b4b6b8" /></g></svg>
<svg style="left:1124px;top:637px" width="18" height="17" viewBox="0 0 18 17"><g transform="translate(0.750 0.250) scale(0.6458 0.6458)"><path d="M10 6L8.590 7.410 13.170 12l-4.580 4.590L10 18l6-6z" fill="#444746" /></g></svg>
<svg style="left:0px;top:650px" width="11" height="11" viewBox="0 0 11 11"><g transform="translate(0.000 0.000) scale(1.0000 1.0000)"><path d="M0 0.300v9.700h9.600A9.650 9.650 0 0 1 0 0.300z" fill="#0a0a0a"/></g></svg>
<svg style="left:1270px;top:650px" width="11" height="11" viewBox="0 0 11 11"><g transform="translate(0.000 0.000) scale(1.0000 1.0000)"><path d="M10 2.200v7.800H2.600A7.600 7.600 0 0 0 10 2.200z" fill="#0a0a0a"/></g></svg>
<svg style="left:432px;top:12px" width="18" height="19" viewBox="0 0 18 19"><g transform="translate(0.300 0.800) scale(0.6833 0.6833)"><path d="M22 9.24l-7.19-.62L12 2 9.19 8.63 2 9.24l5.46 4.73L5.82 21 12 17.27 18.18 21l-1.63-7.03L22 9.24zM12 15.4l-3.76 2.27 1-4.28-3.32-2.88 4.38-.38L12 6.1l1.71 4.04 4.380.38-3.320 2.880 1 4.280L12 15.400z" fill="#444746" /></g></svg>
<svg style="left:460px;top:13px" width="19" height="18" viewBox="0 0 19 18" fill="none" stroke="#444746" stroke-width="1.4" stroke-linejoin="round" stroke-linecap="round"><g transform="translate(0.300 0.600) scale(1.0000 1.0000)">
<path d="M10.6 13.6H3.4L1.2 9.9 6 1.8h4l3.1 5.2"/><path d="M8 4.700L4.700 10.400h5.600z"/><path d="M13.300 8.500v5.200M10.700 11.100h5.200" stroke-linecap="butt"/></g></svg>
<svg style="left:488px;top:13px" width="18" height="18" viewBox="0 0 18 18"><g transform="translate(0.500 0.500) scale(0.6500 0.6500)"><path d="M19.35 10.04C18.67 6.59 15.64 4 12 4 9.11 4 6.6 5.64 5.35 8.04 2.34 8.36 0 10.91 0 14c0 3.31 2.69 6 6 6h13c2.76 0 5-2.24 5-5 0-2.64-2.05-4.78-4.65-4.96zM19 18H6c-2.21 0-4-1.79-4-4 0-2.05 1.53-3.76 3.56-3.97l1.07-.11.5-.95C8.08 7.14 9.94 6 12 6c2.620 0 4.880 1.860 5.390 4.430l.3 1.5 1.530.110c1.560.1 2.780 1.410 2.780 2.960 0 1.650-1.350 3-3 3zm-9-3.820l-2.090-2.090L6.500 13.500 10 17l6.010-6.010-1.410-1.410z" fill="#444746" /></g></svg>
<svg style="left:995px;top:15px" width="25" height="25" viewBox="0 0 25 25"><g transform="translate(0.300 0.000) scale(0.9833 0.9833)"><path d="M12 21q-3.450 0-6.012-2.288T3.050 13H5.100q.350 2.600 2.313 4.300T12 19q2.925 0 4.963-2.038T19 12t-2.038-4.963T12 5q-1.725 0-3.225.8T6.250 8H9v2H3V4h2v2.350q1.275-1.600 3.113-2.475T12 3q1.875 0 3.513.713t2.850 1.924 1.925 2.850T21 12t-.712 3.513-1.925 2.850-2.850 1.925T12 21m2.800-4.800L11 12.400V7h2v4.600l3.200 3.200z" fill="#444746" /></g></svg>
<svg style="left:1039px;top:16px" width="23" height="23" viewBox="0 0 23 23"><g transform="translate(0.000 0.500) scale(0.8917 0.8917)"><path d="M21.99 4c0-1.100-.89-2-1.990-2H4c-1.100 0-2 .9-2 2v12c0 1.100.9 2 2 2h14l4 4-.01-18zM20 4v13.170L18.830 16H4V4h16zM6 12h12v2H6zm0-3h12v2H6zm0-3h12v2H6z" fill="#444746" /></g></svg>
<svg style="left:1072px;top:8px" width="114" height="41" viewBox="0 0 114 41"><g transform="translate(0.000 0.000) scale(1.0000 1.0000)"><rect x="1.90" y="1.40" width="108.50" height="35.10" rx="17.5" fill="#c9e6fc" /></g></svg>
<svg style="left:1152px;top:8px" width="6" height="40" viewBox="0 0 6 40"><g transform="translate(0.000 0.000) scale(1.0000 1.0000)"><rect x="1.00" y="1.40" width="0.90" height="34.80" rx="0" fill="#f4f9fe" /></g></svg>
<svg style="left:1089px;top:18px" width="17" height="18" viewBox="0 0 17 18"><g transform="translate(0.100 0.700) scale(0.6583 0.6583)"><path d="M12 2C6.48 2 2 6.48 2 12s4.48 10 10 10 10-4.48 10-10S17.52 2 12 2zm-1 17.930c-3.950-.49-7-3.850-7-7.930 0-.62.08-1.210.21-1.790L9 15v1c0 1.100.9 2 2 2v1.930zm6.900-2.540c-.26-.81-1-1.390-1.900-1.390h-1v-3c0-.55-.45-1-1-1H8v-2h2c.55 0 1-.45 1-1V7h2c1.100 0 2-.9 2-2v-.41c2.930 1.190 5 4.060 5 7.410 0 2.080-.8 3.970-2.100 5.390z" fill="#0b2540" /></g></svg>
<div class="t" style="left:1111.6px;top:20.2px;font-size:12.6px;color:#0b2540;line-height:14px;letter-spacing:.02px;-webkit-text-stroke:.4px #0b2540">Share</div>
<svg style="left:1163px;top:25px" width="10" height="6" viewBox="0 0 10 6"><g transform="translate(0.800 0.450) scale(0.7400 0.7400)"><path d="M0 0h10L5 5z" fill="#0b2540"/></g></svg>
<svg style="left:1197px;top:17px" width="21" height="21" viewBox="0 0 21 21"><g transform="translate(0.300 0.200) scale(0.8000 0.8000)"><path d="M12 1A18 18 0 0 0 23 12A18 18 0 0 0 12 23A18 18 0 0 0 1 12A18 18 0 0 0 12 1z" fill="#444746" /></g></svg>
<svg style="left:1234px;top:12px" width="31" height="31" viewBox="0 0 31 31"><g transform="translate(0.000 0.000) scale(1.0000 1.0000)"><circle cx="14.700" cy="15" r="14" fill="#265296"/></g></svg>
<div class="t" style="left:1234.7px;top:18px;width:28px;text-align:center;font-size:15.4px;color:#fff;line-height:18px">M</div>
<svg style="left:28px;top:66px" width="19" height="19" viewBox="0 0 19 19"><g transform="translate(0.700 0.700) scale(0.7083 0.7083)"><path d="M15.5 14h-.79l-.28-.27C15.41 12.59 16 11.11 16 9.5 16 5.91 13.09 3 9.5 3S3 5.91 3 9.5 5.91 16 9.5 16c1.61 0 3.09-.59 4.23-1.57l.27.28v.79l5 4.99L20.49 19l-4.99-5zm-6 0C7.01 14 5 11.99 5 9.5S7.01 5 9.5 5 14 7.01 14 9.500 11.990 14 9.500 14z" fill="#444746" /></g></svg>
<svg style="left:58px;top:68px" width="18" height="18" viewBox="0 0 18 18"><g transform="translate(0.700 0.200) scale(0.6583 0.6583)"><path d="M7 19v-2h7.1q1.575 0 2.738-1T18 13.5 16.838 11 14.1 10H7.8l2.6 2.6L9 14 4 9l5-5 1.4 1.4L7.8 8h6.3q2.425 0 4.163 1.575T20 13.5t-1.737 3.925T14.1 19z" fill="#444746" /></g></svg>
<svg style="left:86px;top:68px" width="18" height="18" viewBox="0 0 18 18"><g transform="translate(0.700 0.200) scale(0.6583 0.6583)"><path d="M9.9 19q-2.425 0-4.163-1.575T4 13.5t1.737-3.925T9.9 8h6.3l-2.6-2.6L15 4l5 5-5 5-1.4-1.4 2.600-2.600H9.900q-1.575 0-2.738 1T6 13.500 7.163 16 9.900 17H17v2z" fill="#444746" /></g></svg>
<svg style="left:114px;top:67px" width="19" height="19" viewBox="0 0 19 19"><g transform="translate(0.700 0.600) scale(0.6917 0.6917)"><path d="M16 8V5H8v3H6V3h12v5zM18 12.5q.425 0 .713-.288T19 11.500t-.288-.712T18 10.500t-.712.288T17 11.500t.288.712.712.288M16 19v-4H8v4zm2 2H6v-4H2v-6q0-1.275.875-2.137T5 8h14q1.275 0 2.138.863T22 11v6h-4zm2-6v-4q0-.425-.288-.712T19 10H5q-.425 0-.712.288T4 11v4h2v-2h12v2z" fill="#444746" /></g></svg>
<svg style="left:143px;top:67px" width="15" height="18" viewBox="0 0 15 18" fill="none" stroke="#444746" stroke-width="1.3" stroke-linejoin="round"><g transform="translate(0.000 0.000) scale(1.0000 1.0000)">
<rect x="3.950" y="2.550" width="8.200" height="2.900" rx="1.200"/><path d="M3.950 4H3Q2 4 2 5V6.900Q2 7.900 3 7.900H7Q8 7.900 8 8.900V11.500"/><rect x="6.650" y="11.550" width="2.750" height="4.400" rx="1"/></g></svg>
<div class="tb" style="left:172px;top:68.5px;font-size:12.6px;-webkit-text-stroke:.2px #444746">100%</div>
<svg style="left:215px;top:73px" width="9" height="6" viewBox="0 0 9 6"><g transform="translate(0.500 0.750) scale(0.7000 0.7000)"><path d="M0 0h10L5 5z" fill="#444746"/></g></svg>
<div class="sep" style="left:234.0px"></div>
<div class="sep" style="left:381.0px"></div>
<div class="sep" style="left:474.0px"></div>
<div class="sep" style="left:557.9px"></div>
<div class="sep" style="left:677.0px"></div>
<div class="sep" style="left:781.0px"></div>
<div class="sep" style="left:930.0px"></div>
<div class="tb" style="left:248px;top:67.500px;font-size:11.8px">$</div>
<div class="tb" style="left:274.5px;top:67.500px;font-size:11.8px">%</div>
<div class="tb" style="left:299.5px;top:66.200px;font-size:11.4px;font-weight:bold">.0</div>
<svg style="left:306px;top:77px" width="10" height="7" viewBox="0 0 10 7"><g transform="translate(0.500 0.000) scale(1.0000 1.0000)"><path d="M8 2.400H2.800V.5L0 3l2.800 2.500V3.600H8z" fill="#444746"/></g></svg>
<div class="tb" style="left:326.5px;top:66.200px;font-size:11.4px;font-weight:bold;letter-spacing:-.2px">.00</div>
<svg style="left:334px;top:77px" width="10" height="7" viewBox="0 0 10 7"><g transform="translate(0.500 0.000) scale(1.0000 1.0000)"><path d="M0 2.400h5.200V.5L8 3 5.200 5.500V3.600H0z" fill="#444746"/></g></svg>
<div class="tb" style="left:355.8px;top:68.3px;font-size:10.2px;letter-spacing:-.15px;-webkit-text-stroke:.25px #444746">123</div>
<div class="tb" style="left:395.3px;top:68.3px;font-size:12.6px;-webkit-text-stroke:.2px #444746">Arial</div>
<svg style="left:453px;top:73px" width="9" height="6" viewBox="0 0 9 6"><g transform="translate(0.500 0.750) scale(0.7000 0.7000)"><path d="M0 0h10L5 5z" fill="#444746"/></g></svg>
<svg style="left:482px;top:73px" width="14" height="7" viewBox="0 0 14 7"><g transform="translate(0.000 0.000) scale(1.0000 1.0000)"><rect x="1.80" y="1.15" width="8.80" height="1.40" rx="0" fill="#444746" /></g></svg>
<svg style="left:501px;top:63px" width="34" height="26" viewBox="0 0 34 26"><g transform="translate(0.000 0.000) scale(1.0000 1.0000)"><rect x="1.00" y="1.70" width="28.80" height="20.60" rx="3.5" fill="none" stroke="#747775" stroke-width="0.9"/></g></svg>
<div class="tb" style="left:502px;width:29px;text-align:center;top:68.3px;">18</div>
<svg style="left:535px;top:67px" width="18" height="17" viewBox="0 0 18 17"><g transform="translate(0.850 0.450) scale(0.6458 0.6458)"><path d="M19 13h-6v6h-2v-6H5v-2h6V5h2v6h6v2z" fill="#444746" /></g></svg>
<svg style="left:561px;top:60px" width="31" height="32" viewBox="0 0 31 32"><g transform="translate(0.000 0.000) scale(1.0000 1.0000)"><rect x="1.80" y="1.60" width="25.70" height="26.20" rx="3.5" fill="#d7e2fa" /></g></svg>
<div class="tb" style="left:562px;width:26.500px;text-align:center;top:68px;font-size:13px;font-weight:bold;color:#0b2a5c">B</div>
<div class="tb" style="left:596.5px;width:13px;text-align:center;top:67.2px;font-size:15.5px;font-style:italic;font-family:'Liberation Serif',serif;-webkit-text-stroke:.45px #444746">I</div>
<div class="tb" style="left:624.8px;width:13px;text-align:center;top:68px;font-size:14.6px;">S</div>
<svg style="left:623px;top:73px" width="20" height="7" viewBox="0 0 20 7"><g transform="translate(0.000 0.000) scale(1.0000 1.0000)"><rect x="1.20" y="1.30" width="14.40" height="1.40" rx="0" fill="#444746" /></g></svg>
<div class="tb" style="left:653.3px;width:13px;text-align:center;top:66.6px;font-size:12.2px;-webkit-text-stroke:.3px #444746">A</div>
<div class="a" style="left:650.00px;top:80.30px;width:20.00px;height:3.40px;background:#e63a2c;"></div>
<svg style="left:687px;top:66px" width="17" height="16" viewBox="0 0 17 16"><g transform="translate(0.550 0.350) scale(0.6042 0.6042)"><path d="M16.560 8.940L7.620 0 6.210 1.410l2.380 2.380-5.150 5.150c-.59.59-.59 1.540 0 2.120l5.500 5.500c.29.29.68.44 1.060.44s.77-.15 1.060-.44l5.500-5.500c.59-.58.59-1.530 0-2.120zM5.210 10L10 5.210 14.790 10H5.210zM19 11.500s-2 2.170-2 3.500c0 1.100.9 2 2 2s2-.9 2-2c0-1.330-2-3.500-2-3.500z" fill="#444746" /></g></svg>
<div class="a" style="left:685.80px;top:80.30px;width:20.20px;height:3.40px;background:#fbf355;"></div>
<svg style="left:717px;top:67px" width="18" height="18" viewBox="0 0 18 18"><g transform="translate(0.100 0.700) scale(0.6667 0.6667)"><path d="M3 3v18h18V3H3zm8 16H5v-6h6v6zm0-8H5V5h6v6zm8 8h-6v-6h6v6zm0-8h-6V5h6v6z" fill="#444746" /></g></svg>
<svg style="left:747px;top:69px" width="15" height="15" viewBox="0 0 15 15" fill="none" stroke="#b5b8b6" stroke-width="1.3"><g transform="translate(0.600 0.300) scale(0.9846 0.9846)">
<path d="M4 .7H.7v3.600M9 .7h3.300v3.600M4 12.300H.7V8.700M9 12.300h3.300V8.700M.5 6.500h4M12.500 6.500h-4M3.200 4.800l1.700 1.700-1.700 1.700M9.800 4.800L8.100 6.500l1.700 1.700"/></g></svg>
<svg style="left:768px;top:73px" width="9" height="6" viewBox="0 0 9 6"><g transform="translate(0.300 0.750) scale(0.7000 0.7000)"><path d="M0 0h10L5 5z" fill="#b5b8b6"/></g></svg>
<svg style="left:788px;top:67px" width="18" height="18" viewBox="0 0 18 18"><g transform="translate(0.450 0.450) scale(0.6875 0.6875)"><path d="M7 15v2h10v-2H7zm-4 6h18v-2H3v2zm0-8h18v-2H3v2zm4-6v2h10V7H7zM3 3v2h18V3H3z" fill="#444746" /></g></svg>
<svg style="left:809px;top:73px" width="8" height="6" viewBox="0 0 8 6"><g transform="translate(0.000 0.750) scale(0.7000 0.7000)"><path d="M0 0h10L5 5z" fill="#444746"/></g></svg>
<svg style="left:824px;top:67px" width="18" height="19" viewBox="0 0 18 19"><g transform="translate(0.100 0.300) scale(0.7000 0.7000)"><path d="M16 13h-3V3h-2v10H8l4 4 4-4zM4 19v2h16v-2H4z" fill="#444746" /></g></svg>
<svg style="left:844px;top:73px" width="9" height="6" viewBox="0 0 9 6"><g transform="translate(0.500 0.750) scale(0.7000 0.7000)"><path d="M0 0h10L5 5z" fill="#444746"/></g></svg>
<svg style="left:862px;top:69px" width="14" height="14" viewBox="0 0 14 14" fill="none" stroke="#444746" stroke-width="1.4"><g transform="translate(0.600 0.600) scale(0.8923 0.8923)">
<path d="M1 0v13M5 0v4M5 9v4M3.500 6.500h7M8.300 3.800l2.700 2.700-2.700 2.700"/></g></svg>
<svg style="left:879px;top:73px" width="9" height="6" viewBox="0 0 9 6"><g transform="translate(0.800 0.750) scale(0.7000 0.7000)"><path d="M0 0h10L5 5z" fill="#444746"/></g></svg>
<div class="tb" style="left:897.2px;width:13px;text-align:center;top:67.4px;font-size:10.6px;-webkit-text-stroke:.3px #444746">A</div>
<svg style="left:898px;top:77px" width="14" height="7" viewBox="0 0 14 7"><g transform="translate(0.600 0.400) scale(0.8923 0.8000)"><path d="M0 2.300h9.500V.3L13 3 9.500 5.700V3.700H0z" fill="#444746"/></g></svg>
<svg style="left:915px;top:73px" width="9" height="6" viewBox="0 0 9 6"><g transform="translate(0.800 0.750) scale(0.7000 0.7000)"><path d="M0 0h10L5 5z" fill="#444746"/></g></svg>
<svg style="left:938px;top:66px" width="19" height="19" viewBox="0 0 19 19"><g transform="translate(0.300 0.600) scale(0.7250 0.7250)"><path d="M3.9 12c0-1.710 1.390-3.100 3.100-3.100h4V7H7c-2.760 0-5 2.240-5 5s2.240 5 5 5h4v-1.900H7c-1.710 0-3.100-1.390-3.100-3.100zM8 13h8v-2H8v2zm9-6h-4v1.900h4c1.710 0 3.100 1.390 3.100 3.100s-1.390 3.100-3.100 3.100h-4V17h4c2.760 0 5-2.240 5-5s-2.240-5-5-5z" fill="#444746" /></g></svg>
<svg style="left:966px;top:67px" width="19" height="19" viewBox="0 0 19 19"><g transform="translate(0.700 0.700) scale(0.6917 0.6917)"><path d="M22 4c0-1.100-.9-2-2-2H4c-1.100 0-2 .9-2 2v12c0 1.100.9 2 2 2h14l4 4V4zm-2 13.170L18.830 16H4V4h16v13.170zM13 5h-2v4H7v2h4v4h2v-4h4V9h-4z" fill="#444746" transform="translate(24 0) scale(-1 1)"/></g></svg>
<svg style="left:995px;top:67px" width="18" height="18" viewBox="0 0 18 18"><g transform="translate(0.000 0.500) scale(0.6833 0.6833)"><path d="M19 3H5c-1.100 0-2 .9-2 2v14c0 1.100.9 2 2 2h14c1.100 0 2-.9 2-2V5c0-1.100-.9-2-2-2zm0 16H5V5h14v14zM7 10h2v7H7zm4-3h2v10h-2zm4 6h2v4h-2z" fill="#444746" /></g></svg>
<svg style="left:1017px;top:60px" width="31" height="32" viewBox="0 0 31 32"><g transform="translate(0.000 0.000) scale(1.0000 1.0000)"><rect x="1.20" y="1.60" width="25.60" height="26.20" rx="3.5" fill="#d7e2fa" /></g></svg>
<svg style="left:1023px;top:68px" width="17" height="17" viewBox="0 0 17 17"><g transform="translate(0.000 0.100) scale(0.6500 0.6500)"><path d="M4.250 5.610C6.270 8.200 10 13 10 13v6c0 .55.45 1 1 1h2c.55 0 1-.45 1-1v-6s3.720-4.800 5.740-7.390c.51-.66.04-1.610-.79-1.610H5.040c-.83 0-1.300.95-.79 1.610z" fill="#0b2a5c" /></g></svg>
<svg style="left:1049px;top:68px" width="16" height="17" viewBox="0 0 16 17" fill="none" stroke="#444746" stroke-width="1.4"><g transform="translate(0.300 0.400) scale(0.9733 0.9733)">
<path d="M1 11V1h10"/><rect x="3.700" y="3.700" width="10.300" height="10.300" rx="1"/><path d="M3.700 7.300h10.300M3.700 10.600h10.300M7.200 7.300v6.700M10.600 7.300v6.700"/></g></svg>
<svg style="left:1069px;top:73px" width="9" height="6" viewBox="0 0 9 6"><g transform="translate(0.500 0.750) scale(0.7000 0.7000)"><path d="M0 0h10L5 5z" fill="#444746"/></g></svg>
<svg style="left:1087px;top:67px" width="17" height="18" viewBox="0 0 17 18"><g transform="translate(0.000 0.300) scale(0.6667 0.6667)"><path d="M18 4H6v2l6.500 6L6 18v2h12v-3h-7l5-5-5-5h7z" fill="#444746" /></g></svg>
<svg style="left:1183px;top:66px" width="20" height="19" viewBox="0 0 20 19"><g transform="translate(0.800 0.600) scale(0.7250 0.7250)"><path d="M7.410 15.410L12 10.830l4.590 4.580L18 14l-6-6-6 6z" fill="#444746" /></g></svg>
</div>
</body></html>
